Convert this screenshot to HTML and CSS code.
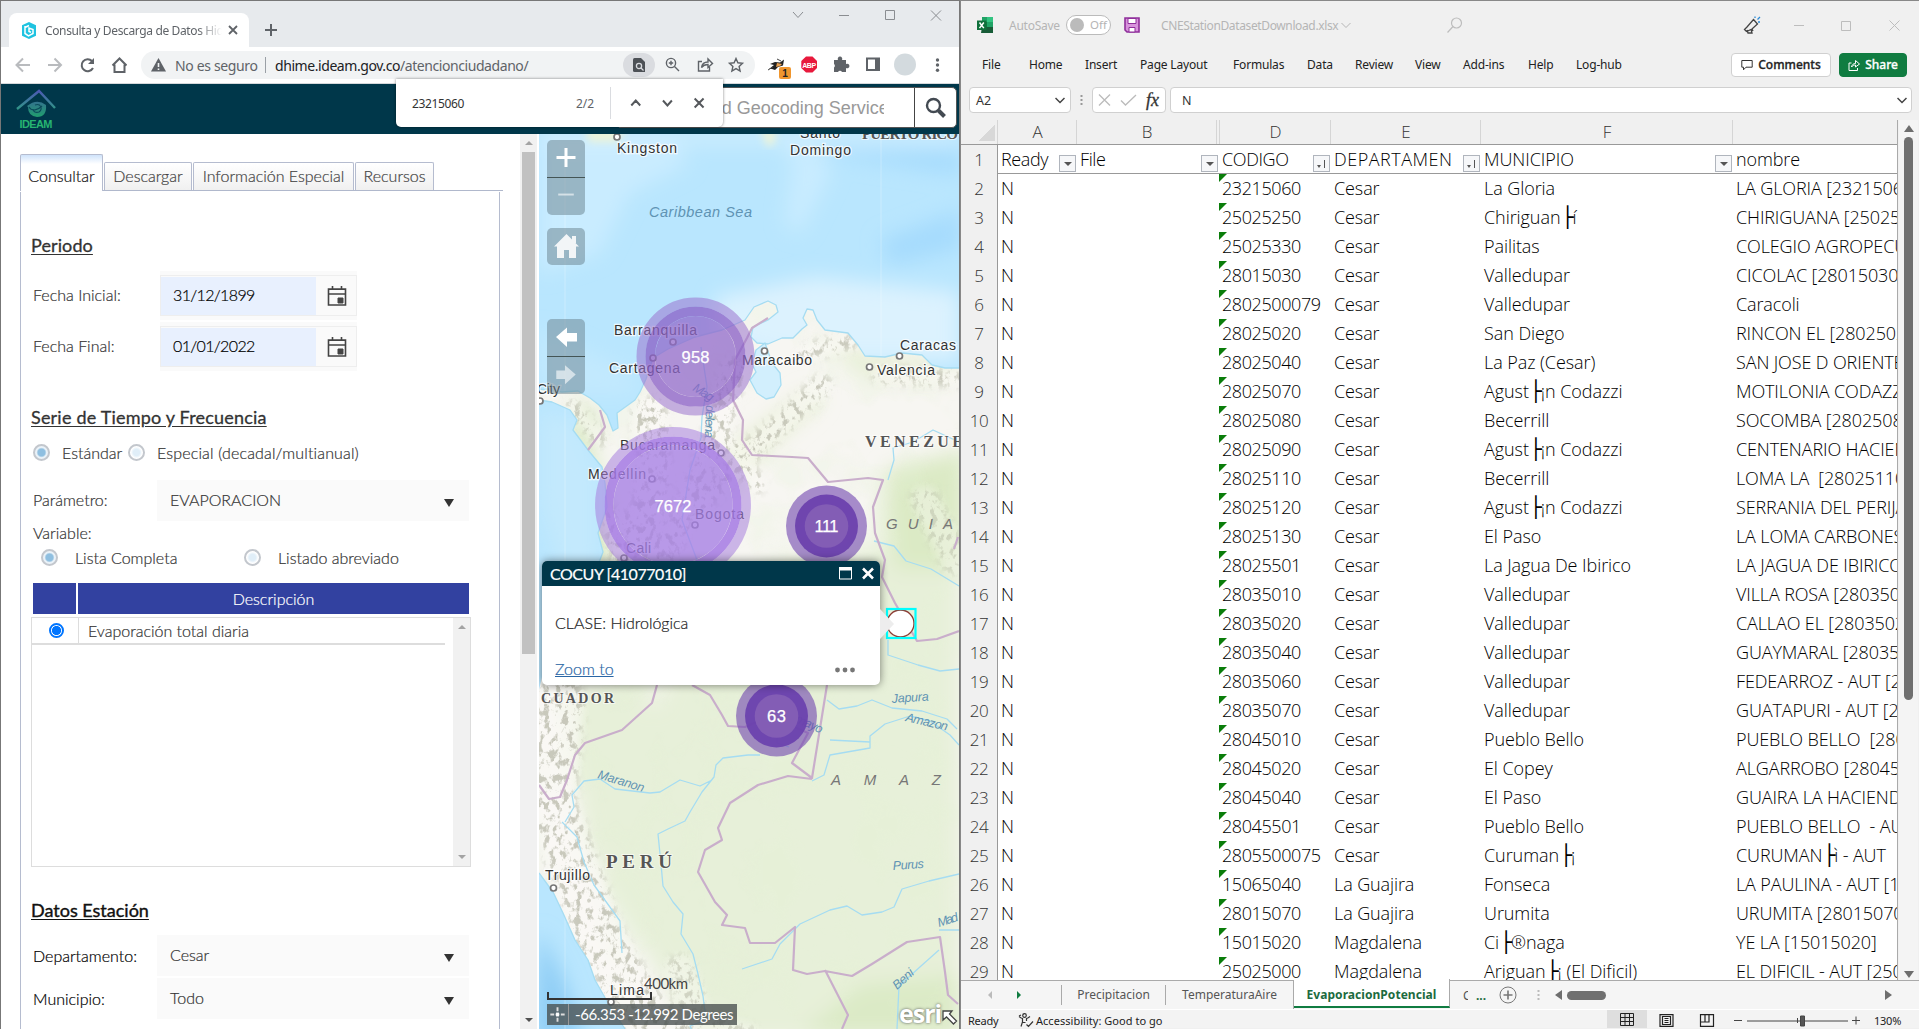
FILE: index.html
```html
<!DOCTYPE html>
<html lang="es">
<head>
<meta charset="utf-8">
<title>Consulta y Descarga de Datos Hidrometeorológicos</title>
<link rel="stylesheet" href="styles.css">
</head>
<body>
<div class="desktop">

<section class="browser">
  <header class="tabstrip">
    <div class="btab">
      <svg class="favicon" width="16" height="17" viewBox="0 0 16 17"><path d="M8 0l7 3.2v10.6L8 17l-7-3.2V3.200z" fill="#1fc3e0"/><path d="M4 4v7.500l3.500 2.300 4.500-2.300V7.500L8 6v3.500l2 .8M4 5.500l4-2" fill="none" stroke="#fff" stroke-width="1.500"/></svg>
      <span class="btab-title">Consulta y Descarga de Datos Hidrológicos</span>
      <svg width="10" height="10" viewBox="0 0 10 10"><path d="M1 1l8 8M9 1L1 9" stroke="#5f6368" stroke-width="1.800"/></svg>
    </div>
    <svg class="newtab" width="12" height="12" viewBox="0 0 12 12"><path d="M6 0v12M0 6h12" stroke="#5f6368" stroke-width="2"/></svg>
    <svg class="winbtns" width="152" height="14" viewBox="0 0 152 14" fill="none" stroke="#8a8d91"><path d="M1 4l5 5.500L11 4M47 7.500h10M93.500 2.500h9v9h-9zM139 2.500l10 10M149 2.500l-10 10"/></svg>
  </header>

  <div class="toolbar">
    <svg class="nav" width="112" height="18" viewBox="0 0 112 18" fill="none" stroke-width="2"><path d="M15 9H2M8 2.500L1.500 9 8 15.500M33 9h13M39.500 2.500L46 9l-6.500 6.500" stroke="#b9bbbe"/><path d="M77 5a6 6 0 1 0 1 7" stroke="#5f6368"/><path d="M79 2v6h-6z" fill="#5f6368"/><path d="M97.500 9.500l7-7 7 7M99.500 8.500V16h10V8.500" stroke="#5f6368"/></svg>
    <div class="omnibox">
      <svg width="15" height="14" viewBox="0 0 15 14"><path d="M7.500 0L15 13.500H0z" fill="#5f6368"/><path d="M7.500 5v4M7.500 10.500v1.500" stroke="#f1f3f4" stroke-width="1.600"/></svg>
      <span class="insecure">No es seguro</span><i class="sep"></i>
      <span class="url"><b>dhime.ideam.gov.co</b>/atencionciudadano/</span>
      <span class="findpill"><svg width="12" height="14" viewBox="0 0 12 14"><path d="M1.500 0H8l4 4v10H1.500Q0 14 0 12.500V1.500Q0 0 1.500 0z" fill="#4d5156"/><circle cx="6" cy="8" r="2.600" fill="none" stroke="#dadce0" stroke-width="1.300"/><path d="M8 10l2.500 2.500" stroke="#dadce0" stroke-width="1.300"/></svg></span>
      <svg class="omni-icons" width="80" height="16" viewBox="0 0 80 16" fill="none" stroke="#5f6368" stroke-width="1.400"><circle cx="6" cy="6" r="4.600"/><path d="M9.500 9.500L14 14M6 3.800v4.400M3.800 6h4.400M37 4.500h-3.500v9.500h11V10M36.500 10.500c.5-3.500 3-5.500 6.500-5.500V2l4.500 4.500-4.500 4V7.500c-3 0-5 1-6.500 3z"/><path d="M71 1.500l1.900 4.300 4.600.5-3.400 3.100 1 4.600-4.100-2.400-4.100 2.400 1-4.600-3.400-3.100 4.600-.5z"/></svg>
    </div>
    <svg class="exts" width="176" height="30" viewBox="0 0 176 30">
      <path d="M1 17l5-4-4-1 5-2 5 .500 4-3-1 6-5 1.500-3 3-3-1z" fill="#222"/><path d="M9 11l5 1-2 2-4 1z" fill="#e9a050"/><path d="M0 18l5-3M9 7l4 2" stroke="#444"/>
      <rect x="11" y="15" width="12" height="12" rx="2" fill="#f0962e"/><text x="17" y="25" font-size="10" font-weight="bold" text-anchor="middle" fill="#222">1</text>
      <path d="M38 4.500h6.500l4.500 4.600v6.800L44.500 20.500H38L33.300 16V9.100z" fill="#e8193c"/><text x="41.200" y="15.500" font-size="7" font-weight="bold" text-anchor="middle" fill="#fff" textLength="14">ABP</text>
      <path d="M66 8h4a2.300 2.300 0 1 1 4 0h4v4a2.300 2.300 0 1 1 0 4v4h-4a2.300 2.300 0 0 0-4 0h-4v-4.500a2.200 2.200 0 0 0 0-3.500z" fill="#5f6368"/>
      <path d="M99 6.500h12v11.500H99z" fill="none" stroke="#5f6368" stroke-width="2"/><path d="M107 6h4v12h-4z" fill="#5f6368"/>
      <circle cx="137" cy="12.500" r="11" fill="#d3dade"/>
      <circle cx="169.500" cy="8" r="1.700" fill="#5f6368"/><circle cx="169.500" cy="13" r="1.700" fill="#5f6368"/><circle cx="169.500" cy="18.200" r="1.700" fill="#5f6368"/>
    </svg>
  </div>

  <div class="apphead">
    <svg class="logo" width="42" height="42" viewBox="0 0 42 42"><defs><linearGradient id="lg" gradientUnits="userSpaceOnUse" x1="0" y1="2" x2="0" y2="28"><stop offset="0" stop-color="#4d55b5"/><stop offset="1" stop-color="#27ad76"/></linearGradient></defs><path d="M2 21L24 3l16 17" fill="none" stroke="url(#lg)" stroke-width="2.400"/><path d="M12 18q10-8 19-1 1 12-9 12-9-1-9-10z" fill="url(#lg)" opacity=".85"/><path d="M14 19c3 5 9 3 13-1M20 17c6-2 8 4 4 7-3 1-6 0-6-3" fill="none" stroke="#0b4a5a" stroke-width="1.100"/><text x="21" y="40" text-anchor="middle" font-size="11" font-weight="bold" fill="#27b471" textLength="33">IDEAM</text></svg>
    <div class="geosearch"><span class="geo-text">Esri World Geocoding Service</span><span class="geo-btn"><svg width="22" height="22" viewBox="0 0 22 22" fill="none" stroke="#434a52"><circle cx="8.500" cy="8.500" r="6.500" stroke-width="2.400"/><path d="M13.500 13.500l6 6" stroke-width="4"/></svg></span></div>
  </div>

  <div class="appbody">
    <main class="form">
      <nav class="ptabs"><span class="ptab on">Consultar</span><span class="ptab t2">Descargar</span><span class="ptab t3">Información Especial</span><span class="ptab t4">Recursos</span></nav>
      <div class="pane">
        <h2 class="h-per">Periodo</h2>
        <div class="frow date"><label>Fecha Inicial:</label><div class="dbox"><div class="dinner"><span class="dval">31/12/1899</span><svg width="20" height="20" viewBox="0 0 20 20"><path d="M1.500 3h17v16h-17zM1.500 8h17M5.500 0v4M14.500 0v4" fill="none" stroke="#444" stroke-width="1.600"/><path d="M1.500 3.500h17M11 12h5v5h-5z" fill="#444" stroke="#444"/></svg></div></div></div>
        <div class="frow date"><label>Fecha Final:</label><div class="dbox"><div class="dinner"><span class="dval">01/01/2022</span><svg width="20" height="20" viewBox="0 0 20 20"><path d="M1.500 3h17v16h-17zM1.500 8h17M5.500 0v4M14.500 0v4" fill="none" stroke="#444" stroke-width="1.600"/><path d="M1.500 3.500h17M11 12h5v5h-5z" fill="#444" stroke="#444"/></svg></div></div></div>
        <h2 class="h-serie">Serie de Tiempo y Frecuencia</h2>
        <div class="radios r1"><i class="rad sel"></i><span class="w59">Estándar</span><i class="rad"></i><span class="w202">Especial (decadal/multianual)</span></div>
        <div class="frow"><label>Parámetro:</label><div class="select">EVAPORACION<i class="tri"></i></div></div>
        <div class="vlabel">Variable:</div>
        <div class="radios r2"><i class="rad sel"></i><span class="w102">Lista Completa</span><i class="rad"></i><span>Listado abreviado</span></div>
        <div class="ghead"><span></span><span>Descripción</span></div>
        <div class="grid">
          <div class="gmain"><div class="grow"><span class="gsel"><i class="nradio"></i></span><span class="gtxt">Evaporación total diaria</span></div></div>
          <div class="gscroll"><i class="up"></i><i class="down"></i></div>
        </div>
        <h2 class="h-datos">Datos Estación</h2>
        <div class="frow blk"><label>Departamento:</label><div class="select">Cesar<i class="tri"></i></div></div>
        <div class="frow blk"><label>Municipio:</label><div class="select">Todo<i class="tri"></i></div></div>
      </div>
    </main>
    <div class="vscroll"><i class="up"></i><i class="thumb"></i><i class="down dark"></i></div>

    <div class="map">
      <svg class="mapsvg" width="420" height="895" viewBox="539 134 420 895">
        <defs>
          <filter id="blur12" x="-30%" y="-30%" width="160%" height="160%"><feGaussianBlur stdDeviation="10"/></filter>
          <filter id="blur4"><feGaussianBlur stdDeviation="4"/></filter>
          <filter id="relief" x="0" y="0" width="100%" height="100%"><feTurbulence type="fractalNoise" baseFrequency="0.16 0.12" numOctaves="4" seed="8"/><feColorMatrix values="0 0 0 0 .50  0 0 0 0 .50  0 0 0 0 .42  6 0 0 0 -3.050"/></filter>
          <filter id="mottle" x="0" y="0" width="100%" height="100%"><feTurbulence type="fractalNoise" baseFrequency="0.02" numOctaves="3" seed="3"/><feColorMatrix values="0 0 0 0 .78  0 0 0 0 .89  0 0 0 0 .66  4 0 0 0 -1.900"/></filter>
          <clipPath id="landclip"><path d="M539 389L562 392 578 391 590 398 599 405 607 415 613 431 618 428 617 413 635 400 640 392 646 379 653 358 668 349 695 337 722 330 745 320 754 307 768 301 776 305 778 312 768 320 753 327 751 337 757 343 768 344 782 338 793 338 802 329 807 325 803 318 807 309 813 310 817 320 825 330 848 333 858 345 865 356 885 357 902 353 922 355 932 365 945 368 960 368V1030H625L608 1003 595 980 588 960 575 940 563 913 553 892 539 873V690L560 600 598 565 603 552 598 533 607 507 605 483 602 467 588 450 573 430 577 420 570 410 552 402 539 400z"/></clipPath>
          <mask id="mts"><g fill="none" stroke="#fff" stroke-linecap="round" stroke-linejoin="round" filter="url(#blur4)"><path d="M560 700L550 800 575 870 600 940 640 1010 665 1035" stroke-width="48"/><path d="M640 545L655 470 650 415" stroke-width="34"/><path d="M655 580L690 500 715 440 733 370" stroke-width="25"/><path d="M700 505L745 455 790 415 822 385" stroke-width="20"/><path d="M733 445L757 485" stroke-width="15"/><path d="M805 352L850 342M880 375L955 378" stroke-width="15"/><path d="M572 405L600 440" stroke-width="12"/><path d="M615 520L625 560" stroke-width="24"/><path d="M925 500L955 560" stroke-width="28" opacity=".6"/><path d="M680 970L700 1025 745 1040" stroke-width="30" opacity=".7"/></g></mask>
        </defs>
        <rect x="539" y="134" width="420" height="895" fill="#b9e6fe"/>
        <g filter="url(#blur12)"><path d="M539 134h130l20 30-60 30-30 60-60 20zM780 134h40l10 40-30 60-15-10 8-60z" fill="#c9ecff"/><path d="M539 134h420v8H539z" fill="#dcf3ff"/><path d="M715 297l100-20 145 15v70l-160 0-85-20z" fill="#dcf2fe"/><path d="M880 240l80-30v40l-70 15zM800 150h160v25z" fill="#a6dbfd"/><path d="M539 330l90 40 10 25-70 0-30-15z" fill="#c2e9fe"/><path d="M539 410l40 10 20 50 0 90-30 40-30-100z" fill="#c3e9fd"/><path d="M539 930l25 50 20 60h-50z" fill="#8fcdf5"/></g>
        <g filter="url(#blur4)" fill="#eef4d8"><path d="M585 128h42l-10 14h-28zM760 128h16l-1 14-7 6z"/></g>
        <path d="M565 150v880M881 134v250" stroke="#fff" opacity=".25"/>
        <g clip-path="url(#landclip)">
          <rect x="539" y="290" width="420" height="740" fill="#f7f6f2"/>
          <g filter="url(#blur12)"><path d="M690 610L770 560 880 550 880 500 960 450V1040H700L600 880 580 760 660 700z" fill="#e7f0d9"/><path d="M570 395l30 20-8 35 15 40 10 70-40 10z" fill="#dcebc8"/><path d="M885 470l80-20v120h-70z" fill="#dbeac5"/><path d="M560 690l90-20v150l-60 40z" fill="#e7f0d9"/><path d="M700 470l110-80 12 10-100 90zM820 335l60 25 80 5v12l-90 0z" fill="#e4edcf"/><path d="M800 1035l60-50 100-10v60z" fill="#dbeac6"/></g>
          <rect x="539" y="290" width="420" height="740" filter="url(#mottle)" opacity=".22"/>
          <g mask="url(#mts)"><rect x="539" y="290" width="420" height="740" fill="#fbfaf6" opacity=".6"/><rect x="539" y="290" width="420" height="740" filter="url(#relief)" opacity=".8"/></g>
        </g>
        <g fill="none" stroke="#a5dcf2" stroke-width="1.300" stroke-linejoin="round">
          <path d="M539 389L562 392 578 391 590 398 599 405 607 415 613 431 618 428 617 413 635 400 640 392 646 379 653 358 668 349 695 337 722 330 745 320 754 307 768 301 776 305 778 312 768 320 753 327 751 337 757 343 768 344 782 338 793 338 802 329 807 325 803 318 807 309 813 310 817 320 825 330 848 333 858 345 865 356 885 357 902 353 922 355 932 365 945 368 959 368"/>
          <path d="M765 343l7 20 8 10 1 12-7 12-8 2-9-6-7-13 6-8-4-8 4-14z" fill="#d2effd"/>
          <path d="M539 400l13 2 18 8 7 10-4 10 15 20 14 17 3 16 2 24-9 26 5 19-5 13M539 873l14 19 10 21 12 27 13 20 7 20 13 23 17 26"/>
          <path d="M701 437l1-20 5-30-6-40M697 560l-15-40 8-50 12-35M888 480l6-20-1-12 20-6 20-12 26 12M874 541l20 5 12 15 25 8 28 17M888 640v15l30 10 22 6 19-2M827 700l12 9 18-3 15-6 20 8 30 3 25 8 10 10M830 740l40 2 0 6-40 7-6 20-12 6M870 742l0-6 15-12 25-8 20 5 20 14 9 10M785 723l-8 12 0 8 12 4M760 755l-12 0-25 3-7 7-2 12-12 15-12 20-5 9-17 8-10 5 3 30 2 22 10 16 10 12-2 20 12 20 5 20 5 22 3 24-16 6 10 22M565 822l9-15-2-12 12-14 16-2 15 10 35 4 10-1 20-12 20 6 12-6M562 822l15 15 7 25 10 23 13 18 13 18 2 32M742 969l30-10 8-15 20-20 30-14 17-4 15 9 20-3 12-5 8-18 27-8 30-7M939 950l-18 16-22 20-2 43M939 930l20 0"/>
        </g>
        <g fill="none" stroke="#c9aecb" stroke-width="2.200" stroke-linejoin="round">
          <path d="M768 318l-16 10-5 10-12 22-2 40 10 20-1 20 10 15 40 2 16 1 20 24 40-4 15 2-10 27 2 26 10 27-3 17 13 26 22 38 20-2 22-8M600 410l5 17-17 23M657 685l-5 18-30 27-37 13-10 12-8 25-7 17-11 2-10-14M692 685l18 10 12 20 6 11 17 1 20-9 20 5 23 10-16 30 20 15 15-93M812 779l-24-3-30 9-28 18-12 25 4 12-17 10-7 22 17 30 12 13-5 10 23 3 5 15h25l20-16-2 43 14 4 18-3 27 5 20-12 35-22 33-5 5 35 3 23 10 9M825 970l23 45-6 14M958 537l-4 12"/>
        </g>
        <g fill="#fff" stroke="#777" stroke-width="1.700"><circle cx="617" cy="137" r="3"/><circle cx="673" cy="342" r="3"/><circle cx="653" cy="358" r="3"/><circle cx="764.500" cy="351" r="3"/><circle cx="899.500" cy="356" r="3"/><circle cx="869.500" cy="367" r="3"/><circle cx="652" cy="479" r="3"/><circle cx="721" cy="453" r="3"/><circle cx="695" cy="525" r="3"/><circle cx="540" cy="401" r="3"/><circle cx="624" cy="558" r="3"/><circle cx="553.500" cy="888" r="3"/><circle cx="611" cy="1002" r="3"/></g>
        <g class="city">
          <text x="617" y="153" textLength="60">Kingston</text><text x="800" y="138" textLength="40">Santo</text><text x="790" y="155" textLength="61">Domingo</text>
          <text x="614" y="335" textLength="83">Barranquilla</text><text x="609" y="373" textLength="71">Cartagena</text><text x="742" y="365" textLength="70">Maracaibo</text><text x="900" y="350" textLength="56">Caracas</text><text x="877" y="375" textLength="58">Valencia</text><text x="537" y="394" textLength="23">City</text><text x="620" y="450" textLength="95">Bucaramanga</text><text x="588" y="479" textLength="58">Medellin</text><text x="695" y="519" textLength="49">Bogota</text><text x="626" y="553" textLength="25">Cali</text><text x="545" y="880" textLength="45">Trujillo</text><text x="610" y="995" textLength="34">Lima</text>
        </g>
        <g class="country"><text x="862" y="139" font-size="15" textLength="96">PUERTO RICO</text><text x="865" y="447" font-size="16" textLength="112">VENEZUEL</text><text x="541" y="703" font-size="14" textLength="73">CUADOR</text><text x="606" y="868" font-size="19" textLength="66">PERÚ</text></g>
        <g class="region"><text x="886" y="529" textLength="67">GUIA</text><text x="831" y="785" textLength="110">AMAZ</text></g>
        <g class="water"><text class="sea" x="649" y="217" textLength="103">Caribbean Sea</text><text x="597" y="778" textLength="48" transform="rotate(17 597 778)">Maranon</text><text x="892" y="703" textLength="37" transform="rotate(-4 892 703)">Japura</text><text x="905" y="721" textLength="43" transform="rotate(13 905 721)">Amazon</text><text x="893" y="870" textLength="31" transform="rotate(-4 893 870)">Purus</text><text x="939" y="927" textLength="21" transform="rotate(-18 939 927)">Mad</text><text x="897" y="990" textLength="24" transform="rotate(-42 897 990)">Beni</text><text x="786" y="718" textLength="38" transform="rotate(24 786 718)">tumayo</text><text x="692" y="390" textLength="22" transform="rotate(32 692 390)">Mag</text><text x="706" y="405" textLength="33" transform="rotate(92 706 405)">delena</text></g>
        <g class="clusters">
          <g fill="none"><circle cx="695.500" cy="356.500" r="54.500" stroke="#9a72cd" stroke-width="9" opacity=".55"/><circle cx="695.500" cy="356.500" r="45.300" stroke="#8a5fc6" stroke-width="9.500" opacity=".76"/><circle cx="695.500" cy="356.500" r="40.500" fill="#9068ca" opacity=".74"/></g>
          <g fill="none"><circle cx="673" cy="505" r="73.200" stroke="#a87fdf" stroke-width="9.500" opacity=".55"/><circle cx="673" cy="505" r="64" stroke="#a479e4" stroke-width="9" opacity=".85"/><circle cx="673" cy="505" r="59.500" fill="#a57ee4" opacity=".78"/></g>
          <g><circle cx="826.500" cy="526" r="40.500" fill="#6f45af" opacity=".6"/><circle cx="826.500" cy="526" r="31.500" fill="#6b41ad" opacity=".95"/><circle cx="826.500" cy="526" r="21.800" fill="#835db5"/></g>
          <g><circle cx="776.500" cy="716" r="40.500" fill="#6f45af" opacity=".6"/><circle cx="776.500" cy="716" r="31.500" fill="#6b41ad" opacity=".93"/><circle cx="776.500" cy="716" r="21.800" fill="#835db5"/></g>
          <text x="695.500" y="363" textLength="28">958</text><text x="673" y="512" textLength="37">7672</text><text x="826.500" y="532" textLength="24">111</text><text x="776.500" y="722" textLength="19">63</text>
        </g>
        <circle cx="900.500" cy="623.500" r="13.500" fill="#fff" stroke="#8c3b33" stroke-width="1.300"/><rect x="887" y="609" width="28.500" height="29" fill="none" stroke="#0ff" stroke-width="2.200"/>
      </svg>
      <div class="mctl zoomctl"><svg width="38" height="37" viewBox="0 0 38 37"><path d="M19 8v19M9.500 17.500h19" stroke="#fff" stroke-width="3"/></svg><svg class="dim" width="38" height="37" viewBox="0 0 38 37"><path d="M11 17h16" stroke="#fff" stroke-width="2"/></svg></div>
      <div class="mctl homectl"><svg width="38" height="37" viewBox="0 0 38 37"><path d="M19.500 6L32 18.500h-3V30h-7v-8h-5v8h-7V18.500H7z" fill="#f2f5f7"/><path d="M25 8h4v7h-4z" fill="#f2f5f7"/></svg></div>
      <div class="mctl histctl"><svg width="38" height="37" viewBox="0 0 38 37"><path d="M9 18l11-9.500V14h10v8.500H20V28z" fill="#fff"/></svg><svg class="dim" width="38" height="37" viewBox="0 0 38 37"><path d="M29 18L18 8.500V14H9v8.500h9V28z" fill="#fff"/></svg></div>
      <div class="popup">
        <div class="pophead"><b>COCUY [41077010]</b><svg width="36" height="13" viewBox="0 0 36 13"><path d="M.5 1h12v11H.5z" fill="none" stroke="#fff"/><path d="M0 0h13v3.500H0z" fill="#fff"/><path d="M24 1.500l10 10M34 1.500l-10 10" stroke="#fff" stroke-width="2.600"/></svg></div>
        <div class="popbody"><p>CLASE: Hidrológica</p><div class="popfoot"><a>Zoom to</a><svg width="20" height="6" viewBox="0 0 20 6" fill="#777"><circle cx="2.500" cy="3" r="2.400"/><circle cx="10" cy="3" r="2.400"/><circle cx="17.500" cy="3" r="2.400"/></svg></div></div>
        <i class="poparrow"></i>
      </div>
      <div class="scalebar"><span>400km</span></div>
      <div class="coords"><svg width="22" height="21" viewBox="0 0 22 21"><path d="M11 3v4M11 14v4M3.500 10.500h4M14.500 10.500h4M9 10.500h4" stroke="#ddd" stroke-width="2"/><path d="M11 8.500v4" stroke="#fff" stroke-width="3"/></svg><span>-66.353 -12.992 Degrees</span></div>
      <div class="esri">esri</div>
      <svg class="corner" width="16" height="16" viewBox="0 0 16 16"><path d="M1 1h9L7.500 4l7 7-3 3-7-7L1 10z" fill="#fff" stroke="#444" stroke-width="1.300"/></svg>
    </div>
  </div>

  <div class="findbar"><span class="fq">23215060</span><span class="fc">2/2</span><svg width="100" height="32" viewBox="0 8 100 32" fill="none" stroke="#55585c" stroke-width="2"><path d="M20.500 26.500l4.500-5 4.500 5M52.500 21.500l4.500 5 4.500-5M84.500 19.500l9 9M93.500 19.500l-9 9"/></svg></div>
</section>

<section class="excel">
  <header class="xtitle">
    <svg width="17" height="17" viewBox="0 0 17 17"><path d="M5 0h11v16H5z" fill="#21a366"/><path d="M10 0h6v5h-6z" fill="#33c481"/><path d="M5 5h5v5H5z" fill="#107c41"/><path d="M5 10h11v6H4z" fill="#185c37"/><path d="M0 3.500h9.500V13H0z" fill="#0f703b"/><path d="M2.500 5.500l4.300 5.600M6.800 5.500l-4.300 5.600" stroke="#fff" stroke-width="1.500"/></svg>
    <span class="autos">AutoSave</span><span class="toggle"><i></i>Off</span>
    <svg class="save" width="16" height="16" viewBox="0 0 16 16"><path d="M1 1h14v14H3l-2-2z" fill="#d893dc" stroke="#8f2f9b" stroke-width="1.600"/><path d="M4 1.500h8v5H4zM5 10.500h6V15H5z" fill="#fff" stroke="#8f2f9b"/></svg>
    <span class="fname">CNEStationDatasetDownload.xlsx</span>
    <svg class="chev" width="10" height="7" viewBox="0 0 10 7" fill="none" stroke="#b5b5b5"><path d="M.5 1L5 5.500 9.500 1"/></svg>
    <svg class="xsearch" width="16" height="16" viewBox="0 0 16 16" fill="none" stroke="#bdbdbd" stroke-width="1.200"><circle cx="9.500" cy="6" r="5"/><path d="M6 9.500l-5.500 6"/></svg>
    <svg class="xwin" width="166" height="18" viewBox="0 0 166 18" fill="none" stroke="#bdbdbd"><path d="M10.500 3.500l4 4.500-5.500 5-5.500 2.500-2-2L4 11zM4 14l1 3h4l-1-4M9 13l1 2" stroke="#444" stroke-width="1.300"/><path d="M12 2V.5M14.500 3.500L17 1M15 6h2" stroke="#2b8ad6" stroke-width="1.300"/><path d="M51 9.500h10M98.500 5.500h9v9h-9zM146.500 4.500l10 10M156.500 4.500l-10 10"/></svg>
  </header>
  <div class="xmenu"><span>File</span><span>Home</span><span>Insert</span><span>Page Layout</span><span>Formulas</span><span>Data</span><span>Review</span><span>View</span><span>Add-ins</span><span>Help</span><span>Log-hub</span>
    <button class="xbtn"><svg width="12" height="12" viewBox="0 0 12 12"><path d="M.8 1.500h10.400v6.700H5L2.500 10.800V8.200H.8z" fill="none" stroke="#333"/></svg>Comments</button><button class="xbtn green"><svg width="12" height="12" viewBox="0 0 12 12" fill="none" stroke="#fff"><path d="M3.500 4H1v7.500h8.500V9M3.500 8C4 5.500 5.500 4.500 7.500 4.500v-3L11.500 5 7.500 8V6C6 6 4.500 6.500 3.500 8z"/></svg>Share</button>
  </div>
  <div class="xformula">
    <div class="namebox">A2<svg width="10" height="7" viewBox="0 0 10 7" fill="none" stroke="#444" stroke-width="1.500"><path d="M.5 1L5 5.500 9.500 1"/></svg></div>
    <svg class="dots" width="3" height="12" viewBox="0 0 3 12" fill="#999"><path d="M.5 1h2v2h-2zM.5 5h2v2h-2zM.5 9h2v2h-2z"/></svg>
    <div class="fxbox"><svg width="50" height="14" viewBox="0 0 50 14" fill="none" stroke="#bbb" stroke-width="1.300"><path d="M6 1.500l11 11M17 1.500l-11 11M28 7.500l4.500 4.500L43 2"/></svg><em>fx</em></div>
    <div class="fbox">N<svg width="10" height="7" viewBox="0 0 10 7" fill="none" stroke="#444" stroke-width="1.500"><path d="M.5 1L5 5.500 9.500 1"/></svg></div>
  </div>
  <div class="sheetwrap">
    <div class="sheet">
      <div class="colhead"><span class="corner-sel"></span><span>A</span><span>B</span><span></span><span>D</span><span>E</span><span>F</span><span></span></div>
      <div class="row first"><b>1</b><span>Ready<i class="flt"></i></span><span>File<i class="flt f2"></i></span><span></span><span>CODIGO<i class="flt srt"></i></span><span class="wide">DEPARTAMEN<i class="flt srt"></i></span><span>MUNICIPIO<i class="flt"></i></span><span>nombre</span></div>
      <div class="row"><b>2</b><span>N</span><span></span><span></span><span class="c">23215060</span><span>Cesar</span><span>La Gloria</span><span>LA GLORIA [23215060]</span></div>
      <div class="row"><b>3</b><span>N</span><span></span><span></span><span class="c">25025250</span><span>Cesar</span><span>Chiriguan<u>├</u>í</span><span>CHIRIGUANA [25025250]</span></div>
      <div class="row"><b>4</b><span>N</span><span></span><span></span><span class="c">25025330</span><span>Cesar</span><span>Pailitas</span><span>COLEGIO AGROPECUARIO</span></div>
      <div class="row"><b>5</b><span>N</span><span></span><span></span><span class="c">28015030</span><span>Cesar</span><span>Valledupar</span><span>CICOLAC [28015030]</span></div>
      <div class="row"><b>6</b><span>N</span><span></span><span></span><span class="c">2802500079</span><span>Cesar</span><span>Valledupar</span><span>Caracoli</span></div>
      <div class="row"><b>7</b><span>N</span><span></span><span></span><span class="c">28025020</span><span>Cesar</span><span>San Diego</span><span>RINCON EL [28025020]</span></div>
      <div class="row"><b>8</b><span>N</span><span></span><span></span><span class="c">28025040</span><span>Cesar</span><span>La Paz (Cesar)</span><span>SAN JOSE D ORIENTE</span></div>
      <div class="row"><b>9</b><span>N</span><span></span><span></span><span class="c">28025070</span><span>Cesar</span><span>Agust<u>├</u>¡n Codazzi</span><span>MOTILONIA CODAZZI</span></div>
      <div class="row"><b>10</b><span>N</span><span></span><span></span><span class="c">28025080</span><span>Cesar</span><span>Becerrill</span><span>SOCOMBA [28025080]</span></div>
      <div class="row"><b>11</b><span>N</span><span></span><span></span><span class="c">28025090</span><span>Cesar</span><span>Agust<u>├</u>¡n Codazzi</span><span>CENTENARIO HACIENDA</span></div>
      <div class="row"><b>12</b><span>N</span><span></span><span></span><span class="c">28025110</span><span>Cesar</span><span>Becerrill</span><span>LOMA LA &nbsp;[28025110]</span></div>
      <div class="row"><b>13</b><span>N</span><span></span><span></span><span class="c">28025120</span><span>Cesar</span><span>Agust<u>├</u>¡n Codazzi</span><span>SERRANIA DEL PERIJA</span></div>
      <div class="row"><b>14</b><span>N</span><span></span><span></span><span class="c">28025130</span><span>Cesar</span><span>El Paso</span><span>LA LOMA CARBONES</span></div>
      <div class="row"><b>15</b><span>N</span><span></span><span></span><span class="c">28025501</span><span>Cesar</span><span>La Jagua De Ibirico</span><span>LA JAGUA DE IBIRICO</span></div>
      <div class="row"><b>16</b><span>N</span><span></span><span></span><span class="c">28035010</span><span>Cesar</span><span>Valledupar</span><span>VILLA ROSA [28035010]</span></div>
      <div class="row"><b>17</b><span>N</span><span></span><span></span><span class="c">28035020</span><span>Cesar</span><span>Valledupar</span><span>CALLAO EL [28035020]</span></div>
      <div class="row"><b>18</b><span>N</span><span></span><span></span><span class="c">28035040</span><span>Cesar</span><span>Valledupar</span><span>GUAYMARAL [28035040]</span></div>
      <div class="row"><b>19</b><span>N</span><span></span><span></span><span class="c">28035060</span><span>Cesar</span><span>Valledupar</span><span>FEDEARROZ - AUT [28035060]</span></div>
      <div class="row"><b>20</b><span>N</span><span></span><span></span><span class="c">28035070</span><span>Cesar</span><span>Valledupar</span><span>GUATAPURI - AUT [28035070]</span></div>
      <div class="row"><b>21</b><span>N</span><span></span><span></span><span class="c">28045010</span><span>Cesar</span><span>Pueblo Bello</span><span>PUEBLO BELLO &nbsp;[28045010]</span></div>
      <div class="row"><b>22</b><span>N</span><span></span><span></span><span class="c">28045020</span><span>Cesar</span><span>El Copey</span><span>ALGARROBO [28045020]</span></div>
      <div class="row"><b>23</b><span>N</span><span></span><span></span><span class="c">28045040</span><span>Cesar</span><span>El Paso</span><span>GUAIRA LA HACIENDA</span></div>
      <div class="row"><b>24</b><span>N</span><span></span><span></span><span class="c">28045501</span><span>Cesar</span><span>Pueblo Bello</span><span>PUEBLO BELLO &nbsp;- AUT</span></div>
      <div class="row"><b>25</b><span>N</span><span></span><span></span><span class="c">2805500075</span><span>Cesar</span><span>Curuman<u>├</u>¡</span><span>CURUMAN<u>├</u>ì - AUT</span></div>
      <div class="row"><b>26</b><span>N</span><span></span><span></span><span class="c">15065040</span><span>La Guajira</span><span>Fonseca</span><span>LA PAULINA - AUT [15065040]</span></div>
      <div class="row"><b>27</b><span>N</span><span></span><span></span><span class="c">28015070</span><span>La Guajira</span><span>Urumita</span><span>URUMITA [28015070]</span></div>
      <div class="row"><b>28</b><span>N</span><span></span><span></span><span class="c">15015020</span><span>Magdalena</span><span>Ci<u>├</u>®naga</span><span>YE LA [15015020]</span></div>
      <div class="row"><b>29</b><span>N</span><span></span><span></span><span class="c">25025000</span><span>Magdalena</span><span>Ariguan<u>├</u>¡ (El Dificil)</span><span>EL DIFICIL - AUT [25025000]</span></div>
    </div>
    <div class="xscroll"><i class="xup"></i><i class="xthumb"></i><i class="xdown"></i></div>
  </div>
  <div class="xtabs">
    <span class="arrows"><i class="al"></i><i class="ar"></i></span><span class="st s1">Precipitacion</span><span class="st s2">TemperaturaAire</span><span class="st act">EvaporacionPotencial</span><span class="rest"><span class="cc">C</span><b>...</b><svg width="18" height="18" viewBox="0 0 18 18" fill="none" stroke="#777"><circle cx="9" cy="9" r="8"/><path d="M9 4.500v9M4.500 9h9" stroke-width="1.600"/></svg></span>
    <span class="hs"><svg width="3" height="12" viewBox="0 0 3 12" fill="#bbb"><path d="M.5 1h2v2h-2zM.5 5h2v2h-2zM.5 9h2v2h-2z"/></svg></span><i class="hl"></i><i class="hthumb"></i><i class="hr"></i>
  </div>
  <footer class="xstatus"><span class="rdy">Ready</span><svg width="16" height="15" viewBox="0 0 16 15" fill="none" stroke="#333" stroke-width="1.200"><circle cx="6.500" cy="2.500" r="1.800"/><path d="M1 3.500q2.500 2 3.500 2V9l-1.500 4.500M12 3.500q-2.500 2-3.500 2V8M4.500 9.500h3M1 3l2-1M8.500 11.500l2 2L15 8.500"/></svg><span class="acc">Accessibility: Good to go</span>
    <span class="vw"><svg width="14" height="13" viewBox="0 0 14 13" fill="none" stroke="#222"><path d="M.5.500h13v12H.5zM.5 4.500h13M.5 8.500h13M5 .5v12M9.500 .5v12"/></svg></span>
    <svg class="views" width="56" height="13" viewBox="0 0 56 13" fill="none" stroke="#222" stroke-width="1.200"><path d="M1 .6h13v11.800H1zM3.500 2.500h8v8h-8zM5.500 4.500h4M5.500 6.500h4M5.500 8.500h4M41.500 .6h13v11.800h-13zM41.500 8h8.500V.6M46 8V.6"/></svg>
    <svg class="zoomer" width="130" height="13" viewBox="0 0 130 13" stroke="#444" fill="none"><path d="M1 6.500h8M14 7h101M119 6.500h8M123 2.500v8M64.500 4v5"/><path d="M67.500 2h4v10h-4z" fill="#555"/></svg><span>130%</span></footer>
</section>
</div>
</body>
</html>
```
FILE: styles.css
```css
* { box-sizing: border-box; }
body { margin: 0; background: #f0f0f0; overflow: hidden; }
i, em { font-style: normal; }
svg { display: block; flex: none; }
.desktop { display: flex; width: 1919px; height: 1029px; overflow: hidden; }

/* ---------- browser ---------- */
.browser { position: relative; width: 960px; height: 1029px; border: 1px solid #777; border-bottom: 0; display: flex; flex-direction: column; font-family: "Noto Sans", sans-serif; background: #fff; }
.tabstrip { height: 46px; background: #e7eaed; display: flex; align-items: flex-start; }
.btab { margin: 12px 0 0 8px; width: 240px; height: 34px; background: #fff; border-radius: 8px 8px 0 0; display: flex; align-items: center; padding: 0 11px 0 12px; }
.btab-title { flex: none; margin: 0 6px 0 8px; width: 177px; font-size: 12px; letter-spacing: -0.37px; color: #5f6368; white-space: nowrap; overflow: hidden; -webkit-mask-image: linear-gradient(90deg, #000 86%, transparent); mask-image: linear-gradient(90deg, #000 86%, transparent); }
.newtab { margin: 23px 0 0 16px; }
.winbtns { margin: 7px 15px 0 auto; }
.toolbar { height: 37px; border-bottom: 1px solid #d5d8db; display: flex; align-items: center; }
.nav { margin-left: 14px; }
.omnibox { margin-left: 14px; width: 614px; height: 28px; border-radius: 14px; background: #f1f3f4; display: flex; align-items: center; padding-left: 10px; font-size: 14px; color: #5f6368; white-space: nowrap; }
.insecure { margin-left: 9px; width: 83px; letter-spacing: -0.35px; }
.sep { width: 1px; height: 16px; background: #9aa0a6; margin: 0 9px 0 7px; }
.url { flex: 1; letter-spacing: -0.43px; }
.url b { font-weight: 400; color: #202124; }
.findpill { width: 32px; height: 24px; border-radius: 12px; background: #dadce0; display: flex; align-items: center; justify-content: center; }
.omni-icons { margin: 0 10px 0 10px; }
.exts { margin: 5px 0 0 13px; font-family: "Liberation Sans", sans-serif; align-self: flex-start; }
.apphead { height: 50px; background: #00374a; display: flex; justify-content: space-between; }
.logo { margin: 4px 0 0 14px; font-family: "Liberation Sans", sans-serif; }
.geosearch { margin: 3px 2px 0 0; width: 341px; height: 41px; background: #fff; border: 1px solid #555; border-radius: 5px; display: flex; align-items: center; justify-content: flex-end; }
.geo-text { width: 235px; margin-right: 30px; overflow: hidden; white-space: nowrap; font: 18px/24px "Liberation Sans", sans-serif; color: #999; }
.geo-btn { width: 42px; height: 39px; border-left: 1px solid #444; display: flex; align-items: center; justify-content: center; }
.findbar { position: absolute; left: 395px; top: 78px; width: 327px; height: 48px; background: #fff; border-radius: 0 0 5px 5px; box-shadow: 0 0 3px rgba(0,0,0,.5); display: flex; align-items: center; font-size: 12px; color: #333; padding-left: 16px; letter-spacing: -0.35px; }
.fq { width: 164px; }
.fc { width: 34px; color: #5f6368; letter-spacing: 0; }
.findbar svg { border-left: 1px solid #dadce0; }

.appbody { display: flex; height: 895px; }
.form { width: 519px; padding: 20px 17px 0 19px; font-family: Lato, sans-serif; font-weight: 300; font-size: 16px; color: #333; -webkit-text-stroke: .2px; }
.ptabs { display: flex; align-items: flex-end; height: 37px; border-bottom: 1px solid #b0b8cc; position: relative; z-index: 1; }
.ptab { height: 28px; border: 1px solid #b5bccf; border-bottom: 0; border-radius: 2px 2px 0 0; background: linear-gradient(#fff, #f0f0f0); text-align: center; line-height: 26px; margin-right: 1px; color: #444; white-space: nowrap; }
.ptab.on { width: 83px; height: 37px; margin-bottom: -1px; background: linear-gradient(#cfe3fb, #fff 9px); line-height: 42px; color: #111; }
.t2 { width: 88px; } .t3 { width: 161px; } .t4 { width: 79px; }
.pane { width: 480px; height: 840px; margin-top: 1px; border: 1px solid #b5bccf; border-width: 0 1px; padding-left: 10px; }
h2 { margin: 0; font-size: 18px; font-weight: 400; line-height: 24px; text-decoration: underline; text-underline-offset: 2px; -webkit-text-stroke: .3px; white-space: nowrap; letter-spacing: .1px; }
.h-per { padding-top: 41px; height: 79px; }
.frow { display: flex; height: 41px; margin-bottom: 2px; padding-left: 2px; align-items: center; }
.frow label { width: 124px; white-space: nowrap; line-height: 20px; padding-bottom: 2px; }
.frow.date { height: 49px; }
.frow.date label { width: 127px; }
.blk label { color: #000; padding-bottom: 0; }
.dbox { width: 197px; height: 49px; background: #fafafa; padding: 4px 0; }
.dinner { height: 41px; border: 1px solid #eee; display: flex; align-items: center; }
.dval { width: 155px; height: 38px; background: #e8f0fe; line-height: 36px; padding-left: 12px; color: #000; margin-right: 11px; letter-spacing: -0.75px; word-spacing: 0; letter-spacing: -0.65px; }
.select { width: 312px; height: 41px; background: #fafafa; padding: 0 15px 2px 13px; display: flex; align-items: center; justify-content: space-between; }
.tri { border: 5px solid transparent; border-top: 8px solid #333; border-bottom: 0; margin-top: 6px; }
.h-serie { padding-top: 32px; height: 70px; letter-spacing: .2px; }
.radios { display: flex; align-items: center; white-space: nowrap; }
.rad { flex: none; width: 17px; height: 17px; border-radius: 50%; border: 2px solid #c3c7cd; background: radial-gradient(#e0eef8 35%, #fff 62%); }
.rad.sel { background: radial-gradient(#8fbfe0 38%, #eaf2f8 55%); }
.r1 { height: 18px; padding-left: 2px; margin-bottom: 19px; }
.r1 span { margin: 0 7px 0 12px; }
.w59 { width: 59px; }
.w202 { letter-spacing: .15px; }
.vlabel { height: 21px; line-height: 21px; padding-left: 2px; margin-top: -1px; }
.r2 { height: 28px; padding-left: 10px; margin-bottom: 12px; }
.r2 span { margin-left: 17px; }
.w102 { width: 169px; }
.ghead { display: flex; gap: 2px; padding-left: 2px; color: #fff; line-height: 31px; text-align: center; height: 31px; }
.ghead span { background: #3241a0; width: 43px; }
.ghead span + span { width: 391px; }
.grid { margin-top: 3px; width: 440px; height: 250px; border: 1px solid #ddd; display: flex; justify-content: space-between; }
.grow { display: flex; width: 413px; height: 27px; border-bottom: 2px solid #ddd; align-items: center; }
.gsel { width: 47px; height: 26px; border-right: 1px solid #ddd; display: flex; justify-content: flex-end; align-items: center; padding-right: 14px; }
.nradio { width: 15px; height: 15px; border-radius: 50%; border: 2px solid #0075ff; background: radial-gradient(#0075ff 55%, #fff 62%); }
.gtxt { padding-left: 9px; }
.gscroll, .vscroll { width: 17px; background: #f1f1f1; display: flex; flex-direction: column; align-items: center; justify-content: space-between; padding: 7px 0; }
.up { border: 4px solid transparent; border-bottom: 4px solid #a3a3a3; border-top: 0; }
.down { border: 4px solid transparent; border-top: 4px solid #a3a3a3; border-bottom: 0; }
.dark { border-top-color: #505050; }
.vscroll .thumb { width: 13px; height: 502px; background: #c1c1c1; margin: 7px 0 auto; }
.h-datos { padding-top: 31px; height: 68px; color: #111; -webkit-text-stroke: .4px; letter-spacing: 0; }

/* ---------- map ---------- */
.map { position: relative; width: 420px; margin-left: 2px; height: 895px; overflow: hidden; }
.mapsvg text { font-family: "Liberation Sans", sans-serif; }
.city text { font-size: 14px; fill: #333; stroke: #fff; stroke-width: 2.5px; stroke-opacity: .7; paint-order: stroke; }
.mapsvg .country text { font-family: "Liberation Serif", serif; font-weight: bold; fill: #555; stroke: #fff; stroke-width: 2px; stroke-opacity: .6; paint-order: stroke; }
.region text { font-size: 15px; font-style: italic; fill: #777; }
.water text { font-size: 12.5px; font-style: italic; fill: #5f93b3; }
.water .sea { font-size: 14.5px; }
.mapsvg .clusters text { font-size: 16.5px; fill: #fff; text-anchor: middle; stroke: #fff; stroke-width: .25px; }
.mctl { position: absolute; left: 8px; width: 38px; border-radius: 5px; background: rgba(104,128,140,.5); }
.mctl svg + svg { border-top: 1px solid #455; }
.dim path { opacity: .6; }
.zoomctl { top: 6px; height: 75px; } .homectl { top: 94px; height: 37px; } .histctl { top: 185px; height: 75px; }
.popup { position: absolute; left: 3px; top: 427px; width: 338px; height: 124px; background: #fff; border-radius: 5px; box-shadow: 0 0 8px rgba(0,0,0,.5); font-family: Lato, sans-serif; font-weight: 300; font-size: 16px; color: #222; -webkit-text-stroke: .2px; }
.pophead { height: 25px; background: #00374a; border-radius: 5px 5px 0 0; color: #fff; display: flex; align-items: center; justify-content: space-between; padding: 0 5px 1px 8px; letter-spacing: -0.45px; }
.popbody { padding: 24px 25px 0 13px; }
.popbody p { margin: 0 0 23px; height: 24px; line-height: 26px; }
.popfoot { display: flex; justify-content: space-between; align-items: center; }
.popfoot svg { margin-top: 2px; }
.popfoot a { color: #2a66a5; text-decoration: underline; line-height: 24px; }
.poparrow { position: absolute; left: 338px; top: 48px; border: 15px solid transparent; border-left: 14px solid #ededed; border-right: 0; }
.scalebar { position: absolute; left: 8px; top: 858px; width: 105px; height: 8px; border: 2px solid #333; border-top: 0; }
.scalebar span { position: absolute; left: 95px; top: -18px; font: 15px Lato, sans-serif; letter-spacing: -0.5px; color: #444; }
.coords { position: absolute; left: 8px; top: 870px; width: 190px; height: 21px; background: rgba(72,78,78,.78); color: #fff; font: 15px/21px Lato, sans-serif; display: flex; white-space: nowrap; letter-spacing: -0.4px; }
.coords svg { border-right: 1px solid #999; margin-right: 6px; }
.esri { position: absolute; left: 360px; top: 865px; font: bold 25px/28px "Open Sans", sans-serif; color: #fff; text-shadow: 0 0 3px #555; letter-spacing: -1px; }
.corner { position: absolute; left: 403px; top: 876px; }

/* ---------- excel ---------- */
.excel { width: 959px; height: 1029px; border-left: 1px solid #888; border-top: 1px solid #888; background: #f0f0f0; display: flex; flex-direction: column; font-family: "Noto Sans", sans-serif; font-size: 12.5px; color: #333; }
.xtitle { height: 48px; display: flex; align-items: center; padding-left: 16px; color: #b5b5b5; white-space: nowrap; }
.autos { margin-left: 15px; width: 57px; font-size: 12px; letter-spacing: -0.25px; }
.toggle { width: 45px; height: 20px; border: 1px solid #bbb; border-radius: 10px; background: #fff; display: flex; align-items: center; gap: 6px; padding: 0 0 1px 3px; font-size: 11.5px; line-height: 16px; }
.toggle i { width: 14px; height: 14px; border-radius: 50%; background: #bbb; }
.save { margin-left: 13px; }
.fname { margin-left: 21px; width: 176px; font-size: 12px; letter-spacing: -0.37px; }
.chev { margin-left: 4px; }
.xsearch { margin-left: 96px; }
.xwin { margin-left: 280px; }
.xmenu { height: 31px; display: grid; grid-template-columns: 47px 56px 55px 93px 74px 48px 60px 48px 65px 48px 155px 100px 68px; padding-left: 21px; align-items: center; color: #222; white-space: nowrap; letter-spacing: -0.18px; font-size: 12px; }
.xbtn { height: 24px; width: 100px; border: 1px solid #d0d0d0; border-radius: 4px; background: #fff; font: 500 12px "Noto Sans", sans-serif; padding: 0; display: flex; align-items: center; justify-content: center; gap: 5px; color: #222; -webkit-text-stroke: .3px; }
.xbtn.green { width: 68px; margin-left: 8px; background: #107c41; border-color: #107c41; color: #fff; }
.xformula { height: 40px; padding: 7px 0 0 8px; display: flex; align-items: flex-start; }
.namebox, .fxbox, .fbox { height: 26px; background: #fff; border: 1px solid #d0d0d0; border-radius: 4px; display: flex; align-items: center; justify-content: space-between; }
.namebox { width: 102px; padding: 0 5px 0 6px; }
.dots { margin: 7px 9px 0 9px; }
.fxbox { width: 74px; margin-right: 4px; padding-right: 6px; }
.fxbox em { font: italic 18px/20px "Liberation Serif", serif; color: #333; -webkit-text-stroke: .3px; }
.fbox { width: 742px; padding: 0 4px 0 11px; }
.sheetwrap { display: flex; height: 861px; border-bottom: 1px solid #aaa; }
.sheet { width: 937px; height: 860px; overflow: hidden; border-right: 1px solid #aaa; background: #fff; }
.colhead, .row { display: grid; grid-template-columns: 37px 79px 140px 3px 111px 150px 252px 300px; }
.colhead { height: 25px; background: #f0f0f0; border-bottom: 1px solid #999; font-family: "Open Sans", sans-serif; font-weight: 300; font-size: 17px; line-height: 24px; text-align: center; color: #333; }
.colhead span { border-right: 1px solid #d5d5d5; padding-left: 1px; }
.corner-sel { background: linear-gradient(135deg, transparent 50%, #d8d8d8 50%) 17px 5px / 17px 16px no-repeat; }
.row { height: 29px; font-family: "Open Sans", sans-serif; font-weight: 300; font-size: 18px; line-height: 29px; color: #000; }
.row > span { padding-left: 3px; white-space: pre; letter-spacing: -0.4px; position: relative; }
.row > span:nth-child(5) { padding-left: 2px; }
.row > span:nth-child(6) { letter-spacing: -0.1px; }
.row > span:nth-child(7) { letter-spacing: -0.07px; }
.row > span:nth-child(8) { letter-spacing: -0.12px; }
.row > span.wide { letter-spacing: .5px; }
.row b { font-weight: 300; font-size: 17px; text-align: center; background: #f0f0f0; border-right: 1px solid #999; border-bottom: 1px solid #ddd; color: #333; line-height: 30px; letter-spacing: -0.4px; }
.first { border-bottom: 1px solid #999; }
.row u { text-decoration: none; font: 20px/20px "DejaVu Sans Mono", monospace; margin: 0 -1px 0 1px; }
.c::before { content: ""; position: absolute; left: -1px; top: 0; border: 4px solid #0a7d0a; border-right-color: transparent; border-bottom-color: transparent; }
.flt { position: absolute; right: 1px; top: 10px; width: 17px; height: 17px; border: 1px solid #b0b5bd; background: #f6f7f9; }
.f2 { right: -1px; }
.flt::after { content: ""; position: absolute; left: 4px; top: 6px; border: 4px solid transparent; border-top: 4px solid #555; border-bottom: 0; }
.srt::after { left: 3px; top: 9px; border-width: 3px 2.5px 0; }
.srt::before { content: ""; position: absolute; left: 10px; top: 4px; width: 1px; height: 8px; background: #555; }
.xscroll { width: 19px; margin-left: 1px; background: #f4f4f4; display: flex; flex-direction: column; align-items: center; padding: 5px 0 2px; }
.xup { border: 5px solid transparent; border-bottom: 7px solid #6e6e6e; border-top: 0; }
.xthumb { width: 9px; height: 563px; border-radius: 5px; background: #707070; margin: 5px 0 auto; }
.xdown { border: 5px solid transparent; border-top: 7px solid #6e6e6e; border-bottom: 0; }
.xtabs { height: 28px; background: #f5f5f5; display: flex; align-items: center; color: #555; white-space: nowrap; font-size: 12px; }
.arrows { width: 101px; height: 20px; border-right: 1px solid #aaa; display: flex; align-items: center; padding-left: 27px; gap: 25px; }
.al { border: 4px solid transparent; border-right: 4px solid #bbb; border-left: 0; }
.ar { border: 4px solid transparent; border-left: 4px solid #107c41; border-right: 0; }
.st { text-align: center; height: 20px; line-height: 19px; border-right: 1px solid #aaa; }
.s1 { width: 104px; } .s2 { width: 128px; height: 28px; line-height: 27px; }
.act { width: 156px; height: 29px; margin-top: -4px; line-height: 31px; background: #fff; border-bottom: 2px solid #107c41; color: #1c6b40; font-weight: 700; letter-spacing: .05px; }
.rest { width: 74px; display: flex; align-items: center; gap: 8px; padding-left: 13px; }
.rest .cc { width: 5px; overflow: hidden; } .rest b { color: #1c6b40; margin-right: 5px; }
.hs { width: 28px; display: flex; justify-content: center; }
.hl { margin-left: 3px; border: 5px solid transparent; border-right: 7px solid #6e6e6e; border-left: 0; }
.hthumb { width: 39px; height: 9px; border-radius: 5px; background: #707070; margin-left: 5px; }
.hr { margin-left: 279px; border: 5px solid transparent; border-left: 7px solid #6e6e6e; border-right: 0; }
.xstatus { height: 19px; background: #f3f3f3; border-top: 1px solid #fff; display: flex; align-items: center; font-size: 11px; color: #222; white-space: nowrap; padding: 2px 0 0 7px; letter-spacing: -0.25px; }
.rdy { flex: none; width: 50px; }
.acc { flex: none; margin-left: 2px; width: 571px; letter-spacing: .03px; }
.vw { width: 40px; height: 18px; background: #dedede; display: flex; align-items: center; justify-content: center; margin: -2px 12px 0 0; }
.zoomer { margin: 0 11px 0 18px; }
```
